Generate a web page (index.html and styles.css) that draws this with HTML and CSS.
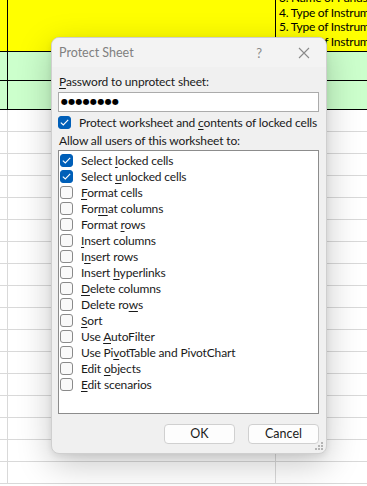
FILE: index.html
```html
<!DOCTYPE html>
<html>
<head>
<meta charset="utf-8">
<link rel="stylesheet" href="styles.css">
</head>
<body>
<div class="sheet">
  <div class="row row-head">
    <div class="cell c-a"></div>
    <div class="cell c-b"></div>
    <div class="cell c-c">
      <div class="cell-text">
        <div>3. Name of Funds</div>
        <div>4. Type of Instrument</div>
        <div>5. Type of Instrument</div>
        <div>6. Type of Instrument</div>
      </div>
    </div>
  </div>
  <div class="row row-green"><div class="cell c-a"></div><div class="cell c-b"></div><div class="cell c-c"></div></div>
  <div class="row row-green"><div class="cell c-a"></div><div class="cell c-b"></div><div class="cell c-c"></div></div>
  <div class="row row-plain"><div class="cell c-a"></div><div class="cell c-b"></div><div class="cell c-c"></div></div>
  <div class="row row-plain"><div class="cell c-a"></div><div class="cell c-b"></div><div class="cell c-c"></div></div>
  <div class="row row-plain"><div class="cell c-a"></div><div class="cell c-b"></div><div class="cell c-c"></div></div>
  <div class="row row-plain"><div class="cell c-a"></div><div class="cell c-b"></div><div class="cell c-c"></div></div>
  <div class="row row-plain"><div class="cell c-a"></div><div class="cell c-b"></div><div class="cell c-c"></div></div>
  <div class="row row-plain"><div class="cell c-a"></div><div class="cell c-b"></div><div class="cell c-c"></div></div>
  <div class="row row-plain"><div class="cell c-a"></div><div class="cell c-b"></div><div class="cell c-c"></div></div>
  <div class="row row-plain"><div class="cell c-a"></div><div class="cell c-b"></div><div class="cell c-c"></div></div>
  <div class="row row-plain"><div class="cell c-a"></div><div class="cell c-b"></div><div class="cell c-c"></div></div>
  <div class="row row-plain"><div class="cell c-a"></div><div class="cell c-b"></div><div class="cell c-c"></div></div>
  <div class="row row-plain"><div class="cell c-a"></div><div class="cell c-b"></div><div class="cell c-c"></div></div>
  <div class="row row-plain"><div class="cell c-a"></div><div class="cell c-b"></div><div class="cell c-c"></div></div>
  <div class="row row-plain"><div class="cell c-a"></div><div class="cell c-b"></div><div class="cell c-c"></div></div>
  <div class="row row-plain"><div class="cell c-a"></div><div class="cell c-b"></div><div class="cell c-c"></div></div>
  <div class="row row-plain"><div class="cell c-a"></div><div class="cell c-b"></div><div class="cell c-c"></div></div>
  <div class="row row-plain"><div class="cell c-a"></div><div class="cell c-b"></div><div class="cell c-c"></div></div>
  <div class="row row-plain"><div class="cell c-a"></div><div class="cell c-b"></div><div class="cell c-c"></div></div>
</div>

<div class="dialog">
  <div class="titlebar">
    <span class="title">Protect Sheet</span>
    <span class="help">?</span>
    <svg class="close" width="12" height="12" viewBox="0 0 12 12"><path d="M1 1 L11 11 M11 1 L1 11" stroke="#8a8a8a" stroke-width="1.1" fill="none"/></svg>
  </div>
  <div class="body">
    <div class="label"><u>P</u>assword to unprotect sheet:</div>
    <div class="input">●●●●●●●●</div>
    <div class="check-row">
      <span class="box checked"><svg width="9" height="7" viewBox="0 0 9 7"><path d="M0.8 3.6 L3.3 6 L8.2 0.9" stroke="#fff" stroke-width="1.1" fill="none"/></svg></span>
      <span>Protect worksheet and <u>c</u>ontents of locked cells</span>
    </div>
    <div class="label label-allow">Allow all users of this worksheet to:</div>
    <div class="list">
      <div class="item"><span class="box checked"><svg width="9" height="7" viewBox="0 0 9 7"><path d="M0.8 3.6 L3.3 6 L8.2 0.9" stroke="#fff" stroke-width="1.1" fill="none"/></svg></span><span>Select <u>l</u>ocked cells</span></div>
      <div class="item"><span class="box checked"><svg width="9" height="7" viewBox="0 0 9 7"><path d="M0.8 3.6 L3.3 6 L8.2 0.9" stroke="#fff" stroke-width="1.1" fill="none"/></svg></span><span>Select <u>u</u>nlocked cells</span></div>
      <div class="item"><span class="box"></span><span><u>F</u>ormat cells</span></div>
      <div class="item"><span class="box"></span><span>For<u>m</u>at columns</span></div>
      <div class="item"><span class="box"></span><span>Format <u>r</u>ows</span></div>
      <div class="item"><span class="box"></span><span><u>I</u>nsert columns</span></div>
      <div class="item"><span class="box"></span><span>I<u>n</u>sert rows</span></div>
      <div class="item"><span class="box"></span><span>Insert <u>h</u>yperlinks</span></div>
      <div class="item"><span class="box"></span><span><u>D</u>elete columns</span></div>
      <div class="item"><span class="box"></span><span>Delete ro<u>w</u>s</span></div>
      <div class="item"><span class="box"></span><span><u>S</u>ort</span></div>
      <div class="item"><span class="box"></span><span>Use <u>A</u>utoFilter</span></div>
      <div class="item"><span class="box"></span><span>Use Pi<u>v</u>otTable and PivotChart</span></div>
      <div class="item"><span class="box"></span><span>Edit <u>o</u>bjects</span></div>
      <div class="item"><span class="box"></span><span><u>E</u>dit scenarios</span></div>
    </div>
    <div class="buttons">
      <button class="btn">OK</button>
      <button class="btn">Cancel</button>
    </div>
  </div>
  <svg class="grip" width="9" height="9" viewBox="0 0 9 9">
    <rect x="6" y="0" width="2" height="2" fill="#b4b4b4"/>
    <rect x="3" y="3" width="2" height="2" fill="#b4b4b4"/>
    <rect x="6" y="3" width="2" height="2" fill="#b4b4b4"/>
    <rect x="0" y="6" width="2" height="2" fill="#b4b4b4"/>
    <rect x="3" y="6" width="2" height="2" fill="#b4b4b4"/>
    <rect x="6" y="6" width="2" height="2" fill="#b4b4b4"/>
  </svg>
</div>
</body>
</html>
```

FILE: styles.css
```css
html, body {
  margin: 0;
  padding: 0;
}
body {
  width: 367px;
  height: 486px;
  overflow: hidden;
  position: relative;
  background: #fff;
  font-family: Lato, "Noto Sans", sans-serif;
}
.sheet {
  display: flex;
  flex-direction: column;
}
.row {
  display: flex;
  flex: none;
}
.cell {
  flex: none;
  box-sizing: border-box;
  height: 100%;
}
.c-a { width: 8px; }
.c-b { width: 268px; }
.c-c { flex: 1; overflow: hidden; }

.row-head {
  height: 52px;
  background: #ffff00;
  border-bottom: 1px solid #000;
  box-sizing: border-box;
}
.row-head .c-a, .row-head .c-b,
.row-green .c-a, .row-green .c-b {
  border-right: 1px solid #000;
}
.row-green {
  height: 29px;
  background: #ccffcc;
  border-bottom: 1px solid #000;
  box-sizing: border-box;
}
.row-plain {
  height: 22px;
  border-bottom: 1px solid #d9d9d9;
  box-sizing: border-box;
}
.row-plain .c-a, .row-plain .c-b {
  border-right: 1px solid #d9d9d9;
}
.cell-text {
  margin-top: -9px;
  padding-left: 3px;
  font-family: Lato, "Noto Sans", sans-serif;
  font-size: 12px;
  letter-spacing: -0.25px;
  line-height: 14.7px;
  color: #000;
  white-space: nowrap;
}

.dialog {
  position: absolute;
  left: 51px;
  top: 37px;
  width: 276px;
  height: 417px;
  box-sizing: border-box;
  border-radius: 8px;
  background: #f0f0f0;
  border: 1px solid #cfcfcf;
  box-shadow: 0 10px 34px rgba(0,0,0,0.22), 0 2px 6px rgba(0,0,0,0.08);
  font-size: 12px;
  letter-spacing: -0.15px;
  color: #1a1a1a;
  overflow: hidden;
}
.titlebar {
  height: 29px;
  background: #f3f3f3;
  display: flex;
  align-items: center;
  padding-left: 7px;
  padding-right: 16px;
}
.title {
  flex: 1;
  color: #808080;
  font-size: 12.5px;
  letter-spacing: 0;
}
.help {
  color: #8a8a8a;
  font-size: 13px;
  margin-right: 36px;
}
.close { display: block; }
.body {
  padding: 6px 7px 0 6px;
}
.label {
  padding-left: 1px;
  height: 17px;
  line-height: 17px;
  white-space: nowrap;
}
.input {
  margin-top: 2px;
  height: 20px;
  box-sizing: border-box;
  border: 1px solid #ababab;
  background: #fff;
  font-family: "DejaVu Sans", sans-serif;
  font-size: 8px;
  line-height: 18px;
  padding-left: 2px;
  letter-spacing: 0.3px;
  color: #000;
}
.check-row {
  margin-top: 4px;
  display: flex;
  align-items: center;
  gap: 8px;
  height: 13px;
  white-space: nowrap;
}
.box {
  width: 13px;
  height: 13px;
  box-sizing: border-box;
  border: 1px solid #8a8a8a;
  border-radius: 3px;
  background: #f9f9f9;
  display: flex;
  align-items: center;
  justify-content: center;
  flex: none;
}
.box.checked {
  background: #005fb8;
  border-color: #005fb8;
}
.label-allow {
  margin-top: 3px;
}
.list {
  margin-top: 1px;
  height: 264px;
  box-sizing: border-box;
  border: 1px solid #8c8c8c;
  background: #fff;
  padding-top: 1px;
  padding-left: 1px;
}
.item {
  height: 16px;
  display: flex;
  align-items: center;
  gap: 8px;
  white-space: nowrap;
}
.buttons {
  display: flex;
  justify-content: flex-end;
  gap: 13px;
  margin-top: 10px;
}
.btn {
  width: 71px;
  height: 20px;
  box-sizing: border-box;
  border: 1px solid #d0d0d0;
  border-radius: 4px;
  background: #fdfdfd;
  font-family: Lato, "Noto Sans", sans-serif;
  font-size: 12.5px;
  color: #1a1a1a;
  padding: 0;
  line-height: 18px;
}
.grip {
  position: absolute;
  right: 2px;
  bottom: 2px;
}
u {
  text-decoration: underline;
  text-underline-offset: 2px;
}
```
